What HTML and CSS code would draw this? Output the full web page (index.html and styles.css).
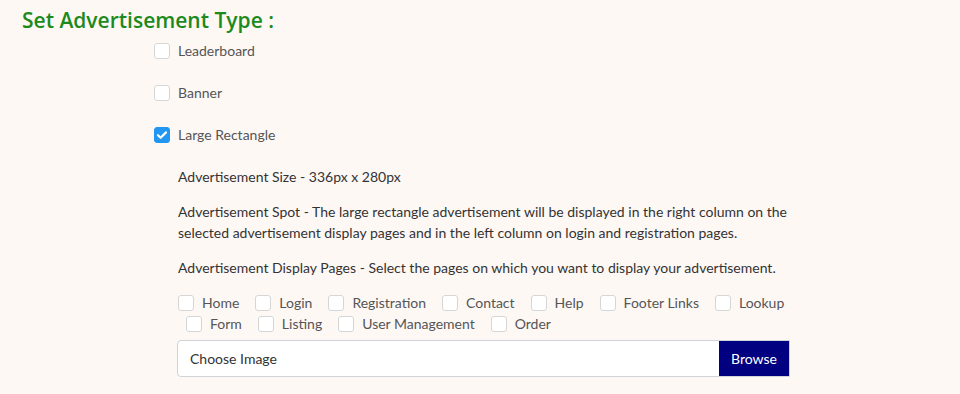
FILE: index.html
```html
<!DOCTYPE html>
<html>
<head>
<meta charset="utf-8">
<link rel="stylesheet" href="styles.css">
</head>
<body>
<div class="page">
  <h2 class="title">Set Advertisement Type :</h2>
  <div class="types">
    <label class="type-row"><span class="cb"></span><span class="lbl">Leaderboard</span></label>
    <label class="type-row"><span class="cb"></span><span class="lbl">Banner</span></label>
    <label class="type-row"><span class="cb checked"><svg viewBox="0 0 16 16" width="16" height="16"><path d="M4 8.2l2.6 2.6L12 5.4" fill="none" stroke="#fff" stroke-width="2.2" stroke-linecap="round" stroke-linejoin="round"/></svg></span><span class="lbl">Large Rectangle</span></label>
  </div>
  <div class="details">
    <p class="info">Advertisement Size - 336px x 280px</p>
    <p class="info">Advertisement Spot - The large rectangle advertisement will be displayed in the right column on the selected advertisement display pages and in the left column on login and registration pages.</p>
    <p class="info">Advertisement Display Pages - Select the pages on which you want to display your advertisement.</p>
    <div class="pages">
      <div class="pages-row">
        <label class="pg"><span class="cb"></span><span class="lbl">Home</span></label>
        <label class="pg"><span class="cb"></span><span class="lbl">Login</span></label>
        <label class="pg"><span class="cb"></span><span class="lbl">Registration</span></label>
        <label class="pg"><span class="cb"></span><span class="lbl">Contact</span></label>
        <label class="pg"><span class="cb"></span><span class="lbl">Help</span></label>
        <label class="pg"><span class="cb"></span><span class="lbl">Footer Links</span></label>
        <label class="pg"><span class="cb"></span><span class="lbl">Lookup</span></label>
      </div>
      <div class="pages-row second">
        <label class="pg"><span class="cb"></span><span class="lbl">Form</span></label>
        <label class="pg"><span class="cb"></span><span class="lbl">Listing</span></label>
        <label class="pg"><span class="cb"></span><span class="lbl">User Management</span></label>
        <label class="pg"><span class="cb"></span><span class="lbl">Order</span></label>
      </div>
    </div>
    <div class="file">
      <span class="file-name">Choose Image</span>
      <span class="browse">Browse</span>
    </div>
  </div>
</div>
</body>
</html>
```

FILE: styles.css
```css
html, body {
  margin: 0;
  padding: 0;
  background: #fef8f5;
}
body {
  font-family: "Lato", "Noto Sans", sans-serif;
  font-size: 14px;
  color: #444;
}
.page {
  padding: 7px 0 0 0;
}
.title {
  margin: 0 0 0 22px;
  font-family: "Open Sans", sans-serif;
  font-size: 21px;
  font-weight: 600;
  line-height: 26px;
  color: #1c8a1c;
}
.types {
  margin: 7px 0 0 154px;
  display: flex;
  flex-direction: column;
  gap: 21px;
}
.type-row {
  display: flex;
  align-items: center;
  height: 21px;
}
.cb {
  box-sizing: border-box;
  width: 16px;
  height: 16px;
  border: 1px solid #d6d6d6;
  border-radius: 3px;
  background: #fff;
  flex: none;
  display: block;
}
.cb.checked {
  background: #2196f3;
  border-color: #2196f3;
  position: relative;
}
.cb.checked svg {
  position: absolute;
  left: -1px;
  top: -1px;
}
.lbl {
  margin-left: 8px;
  color: #555;
  line-height: 21px;
  white-space: nowrap;
}
.details {
  margin: 21px 0 0 178px;
  width: 620px;
}
.info {
  margin: 0 0 14px 0;
  line-height: 21px;
  color: #333;
}
.pages {
  margin-top: 0;
}
.pages-row {
  display: flex;
  align-items: center;
  height: 21px;
}
.pages-row.second {
  padding-left: 8px;
}
.pg {
  display: flex;
  align-items: center;
  margin-right: 16px;
  flex: none;
}
.file {
  margin-top: 6px;
  box-sizing: border-box;
  width: 613px;
  height: 37px;
  margin-left: -1px;
  border: 1px solid #ced4da;
  border-radius: 4px 0 0 4px;
  background: #fff;
  display: flex;
  align-items: stretch;
}
.file-name {
  flex: 1;
  display: flex;
  align-items: center;
  padding-left: 12px;
  color: #333;
}
.browse {
  width: 70px;
  background: #000080;
  color: #fff;
  display: flex;
  align-items: center;
  justify-content: center;
}
```
